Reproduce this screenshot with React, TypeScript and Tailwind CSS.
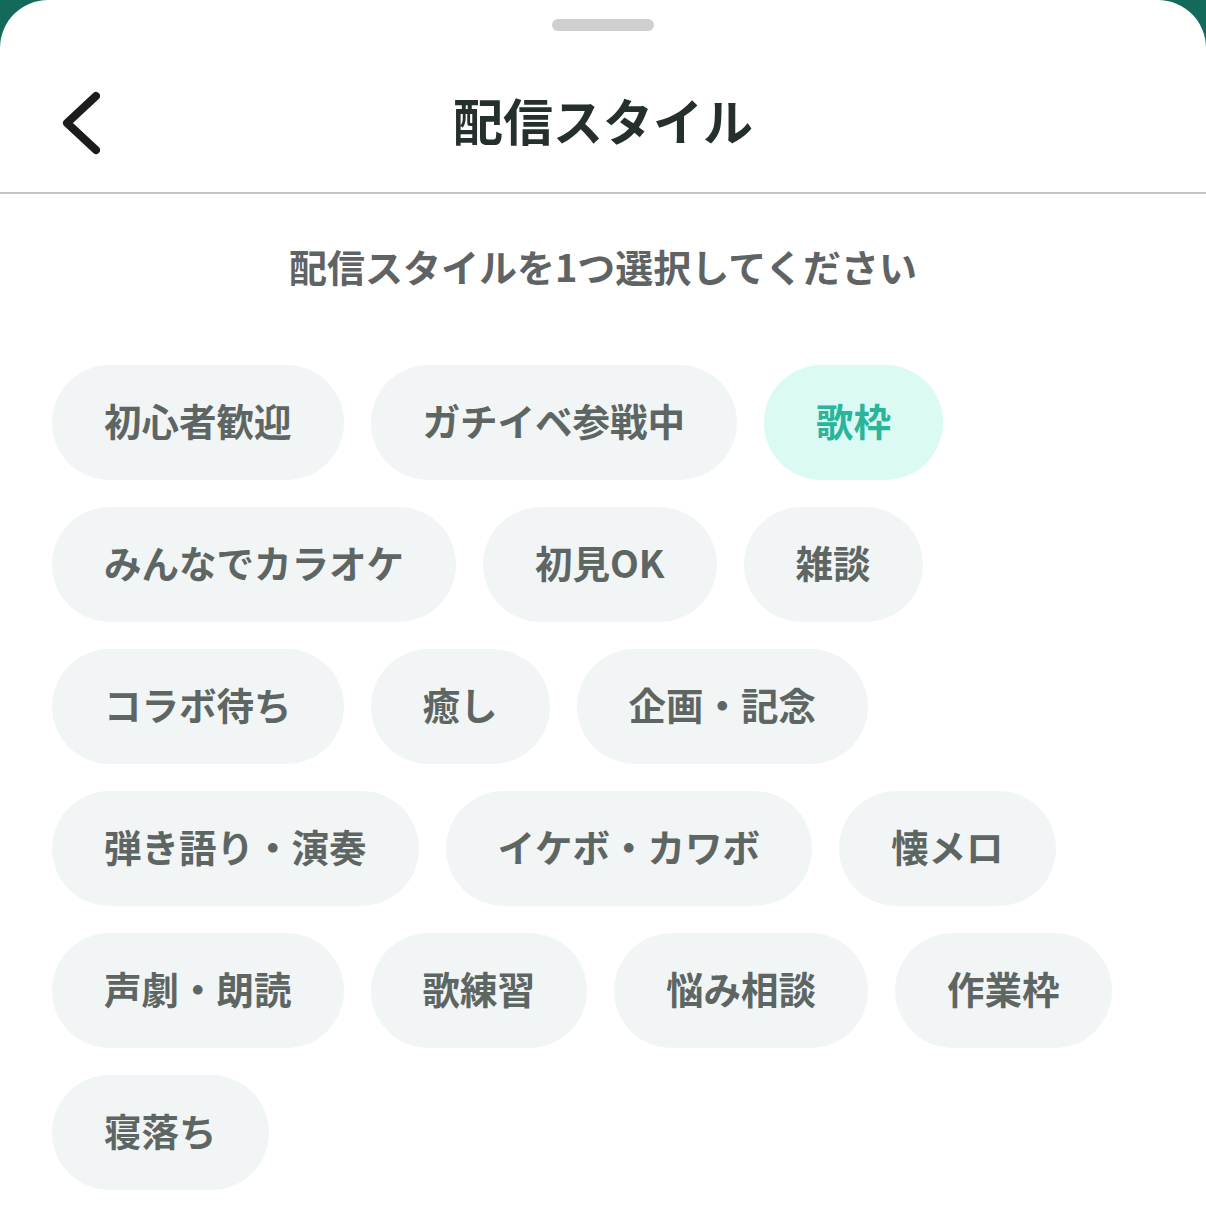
import { useState } from 'react'

const STYLES = [
  '初心者歓迎',
  'ガチイベ参戦中',
  '歌枠',
  'みんなでカラオケ',
  '初見OK',
  '雑談',
  'コラボ待ち',
  '癒し',
  '企画・記念',
  '弾き語り・演奏',
  'イケボ・カワボ',
  '懐メロ',
  '声劇・朗読',
  '歌練習',
  '悩み相談',
  '作業枠',
  '寝落ち',
]

function BackIcon() {
  return (
    <svg width="40" height="64" viewBox="0 0 40 64" fill="none">
      <polyline
        points="36,5 7,32 36,59"
        stroke="#1c1c1c"
        strokeWidth="8"
        strokeLinecap="round"
        strokeLinejoin="round"
      />
    </svg>
  )
}

function StyleChip({
  label,
  selected,
  onClick,
}: {
  label: string
  selected: boolean
  onClick: () => void
}) {
  return (
    <button
      type="button"
      onClick={onClick}
      className={
        selected
          ? 'h-[115px] px-[52px] pb-[5px] rounded-full bg-[#dafaf3] text-[#2ab59a] text-[37.5px] font-bold leading-none whitespace-nowrap'
          : 'h-[115px] px-[52px] pb-[5px] rounded-full bg-[#f2f5f5] text-[#5e6664] text-[37.5px] font-bold leading-none whitespace-nowrap'
      }
    >
      {label}
    </button>
  )
}

export default function App() {
  const [selected, setSelected] = useState('歌枠')

  return (
    <div className="min-h-screen bg-[#13695a] font-['Noto_Sans_CJK_JP','Noto_Sans',sans-serif]">
      <div className="min-h-screen bg-white rounded-t-[48px] pt-[19px]">
        <div className="mx-auto h-[12px] w-[102px] rounded-full bg-[#cfcfcf]" />

        <div className="grid grid-cols-[1fr_auto_1fr] items-center h-[161px] pt-[23px]">
          <button type="button" className="justify-self-start pl-[60px] flex items-center">
            <BackIcon />
          </button>
          <h1 className="pb-[8px] text-[50px] font-bold leading-none text-[#25302e]">配信スタイル</h1>
          <div />
        </div>

        <div className="h-[2px] bg-[#c4c4c4]" />

        <p className="mt-[53px] text-center text-[38px] font-semibold leading-none text-[#5f6363]">
          配信スタイルを1つ選択してください
        </p>

        <div className="mt-[80px] px-[52px] flex flex-wrap gap-[27px]">
          {STYLES.map((s) => (
            <StyleChip key={s} label={s} selected={selected === s} onClick={() => setSelected(s)} />
          ))}
        </div>
      </div>
    </div>
  )
}
